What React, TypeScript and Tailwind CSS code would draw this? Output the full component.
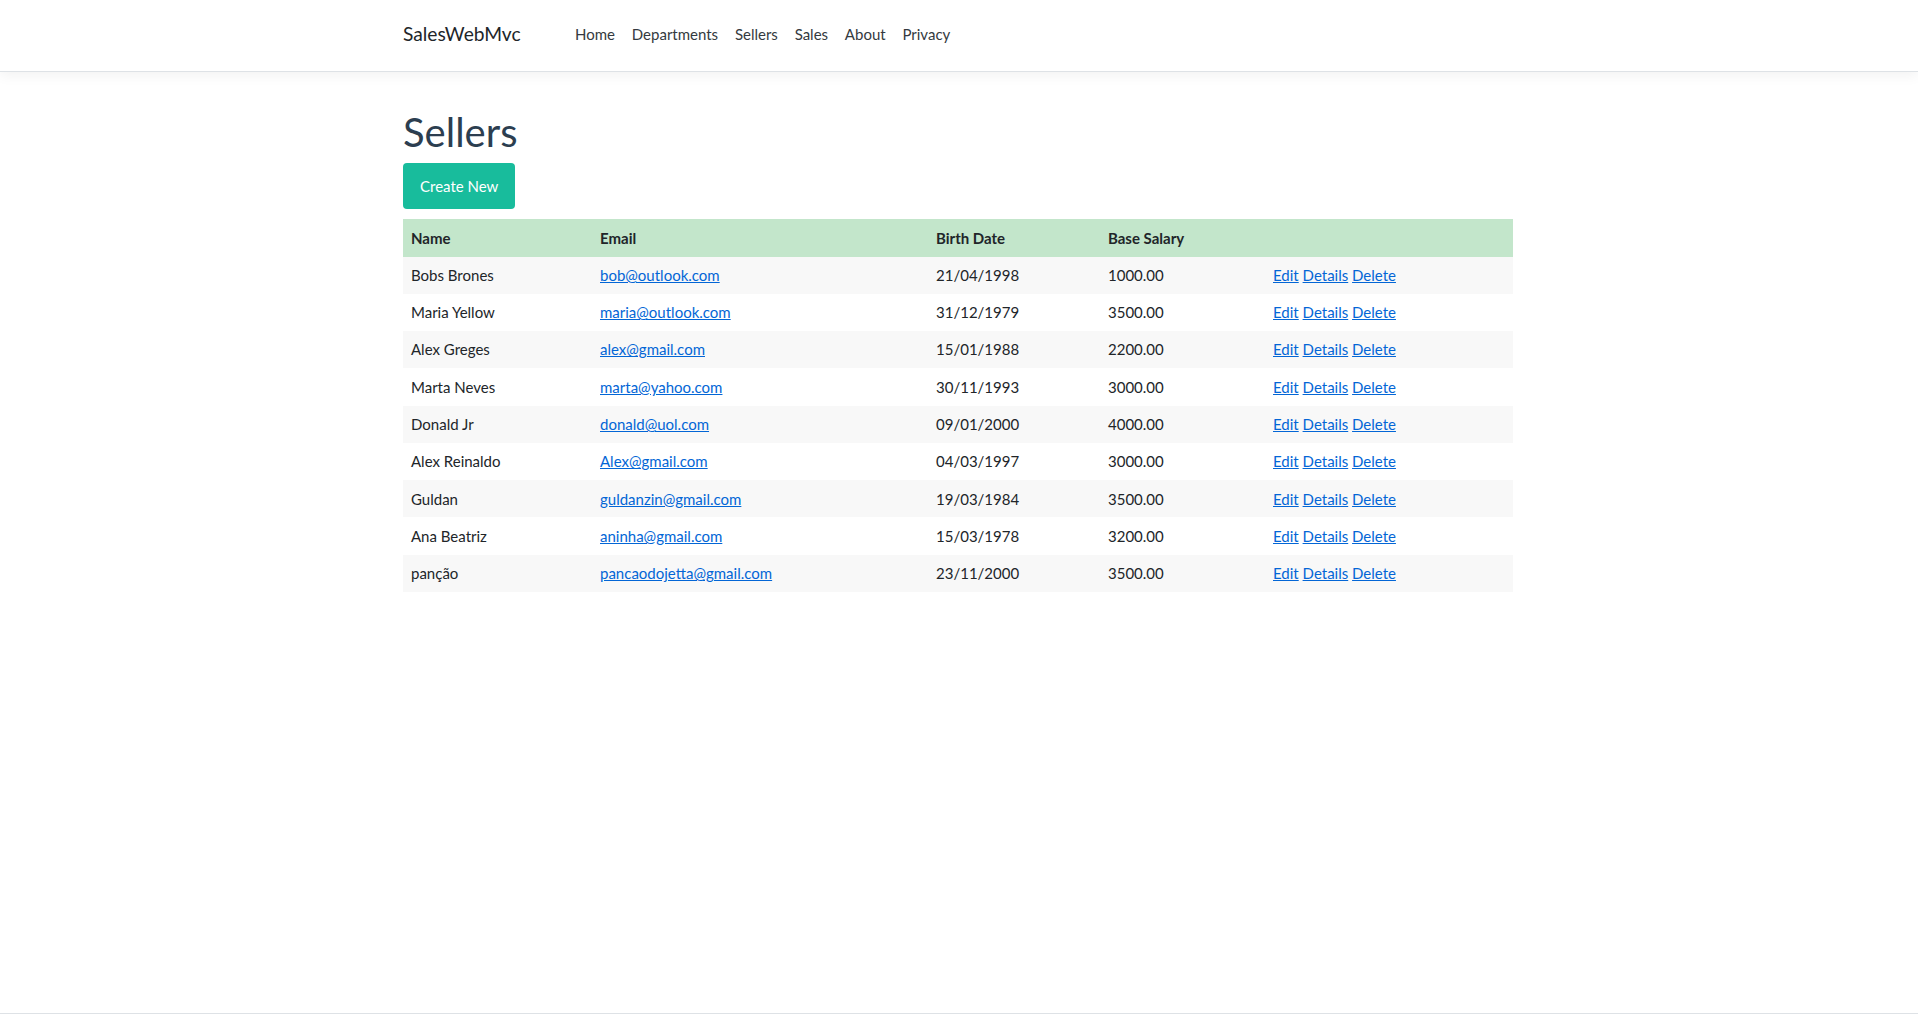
import React from "react";

const sellers = [
  ["Bobs Brones", "bob@outlook.com", "21/04/1998", "1000.00"],
  ["Maria Yellow", "maria@outlook.com", "31/12/1979", "3500.00"],
  ["Alex Greges", "alex@gmail.com", "15/01/1988", "2200.00"],
  ["Marta Neves", "marta@yahoo.com", "30/11/1993", "3000.00"],
  ["Donald Jr", "donald@uol.com", "09/01/2000", "4000.00"],
  ["Alex Reinaldo", "Alex@gmail.com", "04/03/1997", "3000.00"],
  ["Guldan", "guldanzin@gmail.com", "19/03/1984", "3500.00"],
  ["Ana Beatriz", "aninha@gmail.com", "15/03/1978", "3200.00"],
  ["panção", "pancaodojetta@gmail.com", "23/11/2000", "3500.00"],
];

export default function App() {
  return (
    <div className="h-[1033px] flex flex-col bg-white text-[15px] leading-[1.5] text-[#212529] font-['Lato','Open_Sans',sans-serif] overflow-hidden">
      <nav className="h-[72px] shrink-0 border-b border-[#dee2e6] bg-white shadow-[0_4px_12px_rgba(0,0,0,0.05)] flex items-center">
        <div className="w-[1112px] pr-[2px] mx-auto flex items-center pb-[2px]">
          <a className="text-[19.2px] text-[#212529] whitespace-nowrap">SalesWebMvc</a>
          <ul className="flex ml-[46px]">
            {["Home", "Departments", "Sellers", "Sales", "About", "Privacy"].map((l) => (
              <li key={l}>
                <a className="px-[8.4px] text-[#343a40]">{l}</a>
              </li>
            ))}
          </ul>
        </div>
      </nav>

      <main className="flex-1 w-[1112px] pr-[2px] mx-auto pt-[36px]">
        <h1 className="text-[40px] leading-[48px] text-[#2c3e50] mb-[7px]">Sellers</h1>
        <a className="inline-flex items-center justify-center h-[46px] px-[17px] rounded-[4px] bg-[#18bc9c] text-white">
          Create New
        </a>
        <table className="mt-[10px] w-full table-fixed border-collapse">
          <colgroup>
            <col className="w-[189px]" />
            <col className="w-[336px]" />
            <col className="w-[172px]" />
            <col className="w-[165px]" />
            <col />
          </colgroup>
          <thead>
            <tr className="bg-[#c3e6cb]">
              <th className="text-left font-bold px-2 py-[7.5px]">Name</th>
              <th className="text-left font-bold px-2 py-[7.5px]">Email</th>
              <th className="text-left font-bold px-2 py-[7.5px]">Birth Date</th>
              <th className="text-left font-bold px-2 py-[7.5px]">Base Salary</th>
              <th className="px-2 py-[7.5px]"></th>
            </tr>
          </thead>
          <tbody>
            {sellers.map((s, i) => (
              <tr key={i} className={i % 2 === 0 ? "bg-[#f8f8f8]" : "bg-white"}>
                <td className="px-2 py-[7.4px]">{s[0]}</td>
                <td className="px-2 py-[7.4px]">
                  <a className="text-[#0366d6] underline">{s[1]}</a>
                </td>
                <td className="px-2 py-[7.4px]">{s[2]}</td>
                <td className="px-2 py-[7.4px]">{s[3]}</td>
                <td className="px-2 py-[7.4px]">
                  <a className="text-[#0366d6] underline">Edit</a>{" "}
                  <a className="text-[#0366d6] underline">Details</a>{" "}
                  <a className="text-[#0366d6] underline">Delete</a>
                </td>
              </tr>
            ))}
          </tbody>
        </table>
      </main>

      <footer className="h-[20px] shrink-0 border-t border-[#dee2e6]"></footer>
    </div>
  );
}
